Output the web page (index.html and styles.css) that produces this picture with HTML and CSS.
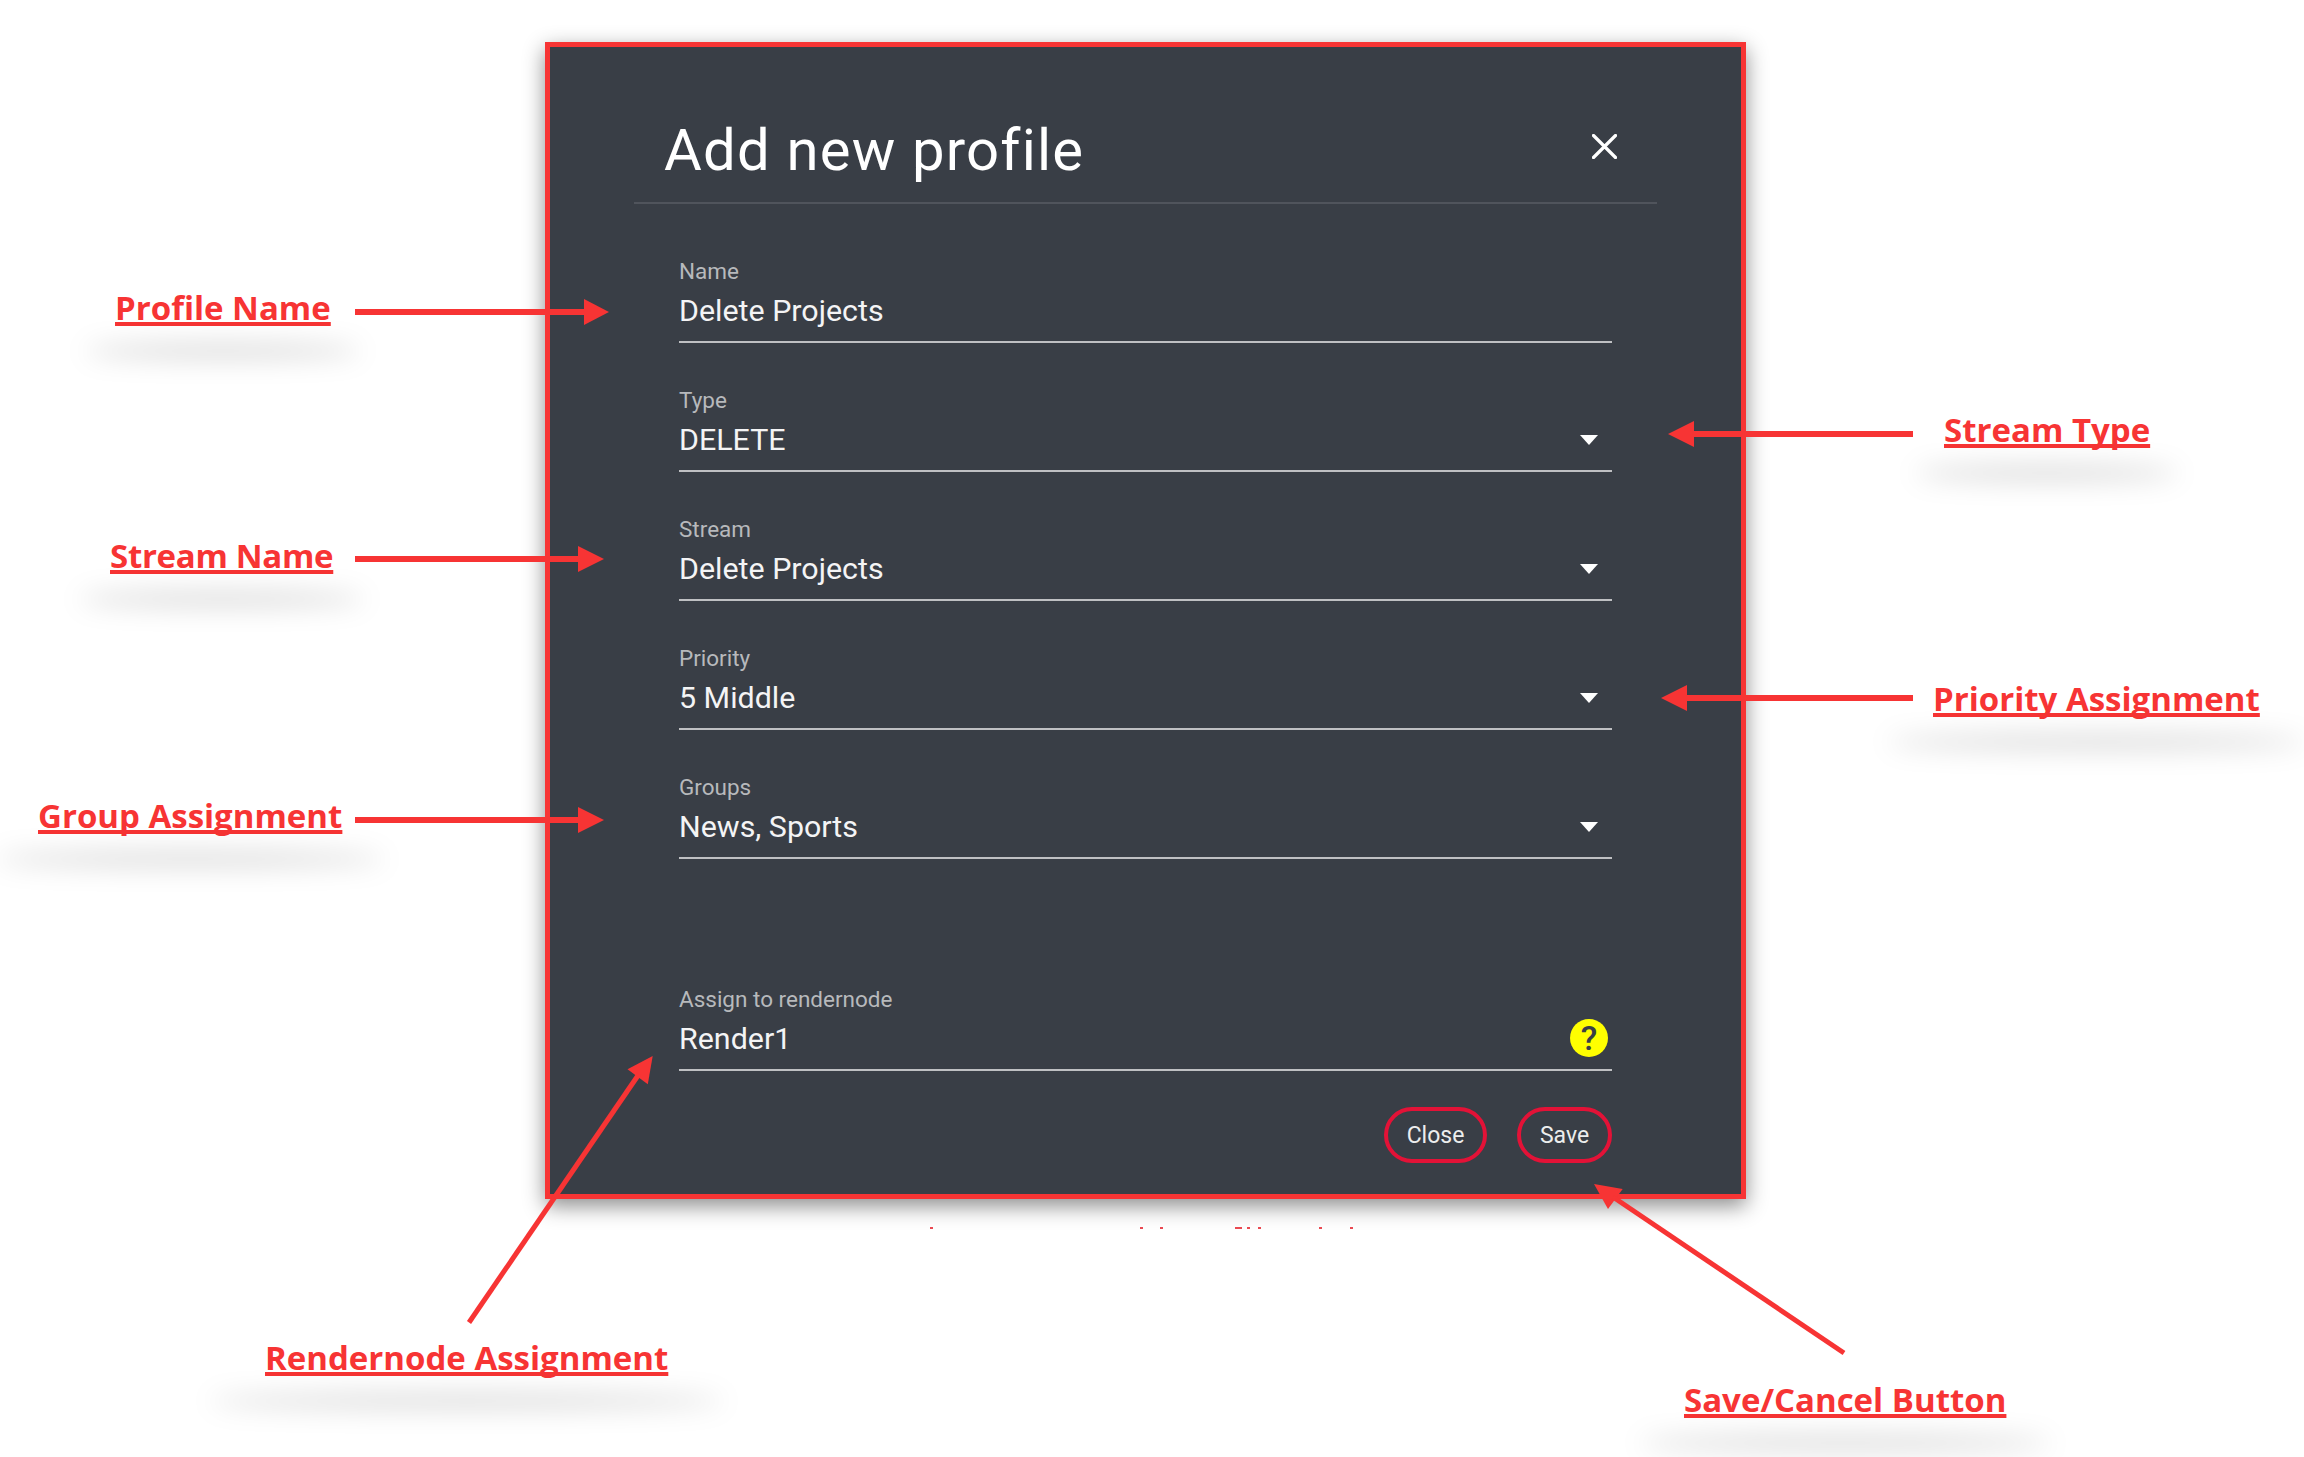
FILE: index.html
```html
<!DOCTYPE html>
<html lang="en">
<head>
<meta charset="utf-8">
<title>Add new profile</title>
<link rel="stylesheet" href="styles.css">
</head>
<body>
<main class="canvas">
  <section class="dialog">
    <header class="dialog-head">
      <h1 class="dialog-title">Add new profile</h1>
      <button class="close-x" aria-label="Close">
        <svg width="25" height="25" viewBox="0 0 25 25"><path d="M1.5 1.5 L23.5 23.5 M23.5 1.5 L1.5 23.5" stroke="#fff" stroke-width="3.2" stroke-linecap="round" fill="none"/></svg>
      </button>
    </header>
    <div class="fields">
      <div class="field"><span class="field-label">Name</span><div class="field-value"><span>Delete Projects</span></div></div>
      <div class="field"><span class="field-label">Type</span><div class="field-value"><span>DELETE</span><i class="caret"></i></div></div>
      <div class="field"><span class="field-label">Stream</span><div class="field-value"><span>Delete Projects</span><i class="caret"></i></div></div>
      <div class="field"><span class="field-label">Priority</span><div class="field-value"><span>5 Middle</span><i class="caret"></i></div></div>
      <div class="field"><span class="field-label">Groups</span><div class="field-value"><span>News, Sports</span><i class="caret"></i></div></div>
      <div class="field field-render"><span class="field-label">Assign to rendernode</span><div class="field-value"><span>Render1</span>
        <svg class="help" width="38" height="38" viewBox="0 0 38 38"><circle cx="19" cy="19" r="19" fill="#ffff00"/><text x="19" y="31" text-anchor="middle" class="help-mark">?</text></svg>
      </div></div>
    </div>
    <footer class="actions">
      <button class="pill pill-close">Close</button>
      <button class="pill pill-save">Save</button>
    </footer>
  </section>

  <svg class="arrows" width="2304" height="1457" viewBox="0 0 2304 1457">
    <g fill="#f73434">
      <rect x="355" y="309" width="232" height="6"/><polygon points="584,299 609,312 584,325"/>
      <rect x="355" y="556" width="226" height="6"/><polygon points="578,546 604,559 578,572"/>
      <rect x="355" y="817" width="226" height="6"/><polygon points="578,807 604,820 578,833"/>
      <rect x="1690" y="431" width="223" height="6"/><polygon points="1694,421 1668,434 1694,447"/>
      <rect x="1684" y="695" width="229" height="6"/><polygon points="1687,685 1661,698 1687,711"/>
      <polygon points="652.7,1056 627.5,1069.3 647.8,1084.3"/>
      <polygon points="1594,1184 1622.7,1189 1608,1209"/>
    </g>
    <g stroke="#f73434" fill="none">
      <path d="M469 1322.500 L639 1074" stroke-width="5"/>
      <path d="M1844 1353 L1613 1197" stroke-width="5"/>
    </g>
    <g fill="#ea4a52">
      <rect x="930" y="1227" width="3" height="2"/><rect x="1140" y="1227" width="3" height="2"/>
      <rect x="1160" y="1227" width="3" height="2"/><rect x="1235" y="1227" width="7" height="2"/>
      <rect x="1247" y="1227" width="3" height="2"/><rect x="1258" y="1227" width="3" height="2"/>
      <rect x="1319" y="1227" width="3" height="2"/><rect x="1350" y="1227" width="3" height="2"/>
    </g>
  </svg>

  <a class="note note-profile">Profile Name</a>
  <a class="note note-stream">Stream Name</a>
  <a class="note note-group">Group Assignment</a>
  <a class="note note-type">Stream Type</a>
  <a class="note note-priority">Priority Assignment</a>
  <a class="note note-render">Rendernode Assignment</a>
  <a class="note note-save">Save/Cancel Button</a>
</main>
</body>
</html>
```
FILE: styles.css
```css
* { box-sizing: border-box; }
html, body { margin: 0; padding: 0; background: #fff; }
.canvas { position: relative; width: 2304px; height: 1457px; overflow: hidden; padding: 42px 0 0 545px; font-family: Roboto, sans-serif; }

.dialog { width: 1201px; height: 1157px; background: #393e46; border: 5px solid #f73434; box-shadow: 0 7px 20px rgba(0,0,0,.45); padding: 0 84px; display: flex; flex-direction: column; color: #fff; }
.dialog-head { height: 157px; flex: none; border-bottom: 2px solid #50545c; padding: 0 40px 0 30px; display: flex; justify-content: space-between; align-items: flex-start; }
.dialog-title { margin: 69px 0 0; font-size: 58px; font-weight: 400; letter-spacing: 1.2px; line-height: 68px; }
.close-x { background: none; border: 0; padding: 0; display: flex; margin-top: 87px; }

.fields { padding: 52px 45px 0; display: flex; flex-direction: column; gap: 42px; }
.field { height: 87px; display: flex; flex-direction: column; }
.field-render { margin-top: 83px; }
.field-label { font-size: 22.5px; line-height: 30px; color: #b7b9bc; }
.field-value { flex: 1; display: flex; align-items: flex-start; justify-content: space-between; font-size: 30.4px; line-height: 36px; border-bottom: 2px solid #bfc0c3; padding-top: 7px; color: #f4f4f5; }
.caret { width: 0; height: 0; border-left: 9.5px solid transparent; border-right: 9.5px solid transparent; border-top: 10px solid #fff; margin: 13px 14px 0 0; }
.help { margin: -2px 4px 0 0; overflow: visible; }
.help-mark { font: 500 34px Roboto, sans-serif; fill: #393e46; }

.actions { display: flex; justify-content: flex-end; gap: 30px; padding: 36px 45px 0 0; }
.pill { height: 56px; border: 4px solid #e31237; border-radius: 28px; background: none; color: #eceded; font: 400 23px Roboto, sans-serif; padding: 0; }
.pill-close { width: 103px; }
.pill-save { width: 95px; }

.arrows { position: absolute; left: 0; top: 0; }

.note { position: absolute; color: #f73434; font: 700 33px/40px "Open Sans", sans-serif; text-decoration: underline; text-decoration-thickness: 4px; text-underline-offset: 2px; text-decoration-skip-ink: none; white-space: nowrap; }
.note::after { content: ""; position: absolute; left: -14%; right: -14%; top: 56px; height: 14px; border-radius: 50%; background: rgba(0,0,0,.17); filter: blur(13px); }
.note-profile { left: 115px; top: 288px; }
.note-stream { left: 110px; top: 536px; letter-spacing: -.3px; }
.note-group { left: 38px; top: 796px; }
.note-type { left: 1944px; top: 410px; }
.note-priority { left: 1933px; top: 679px; }
.note-render { left: 265px; top: 1338px; }
.note-save { left: 1684px; top: 1380px; }
```
